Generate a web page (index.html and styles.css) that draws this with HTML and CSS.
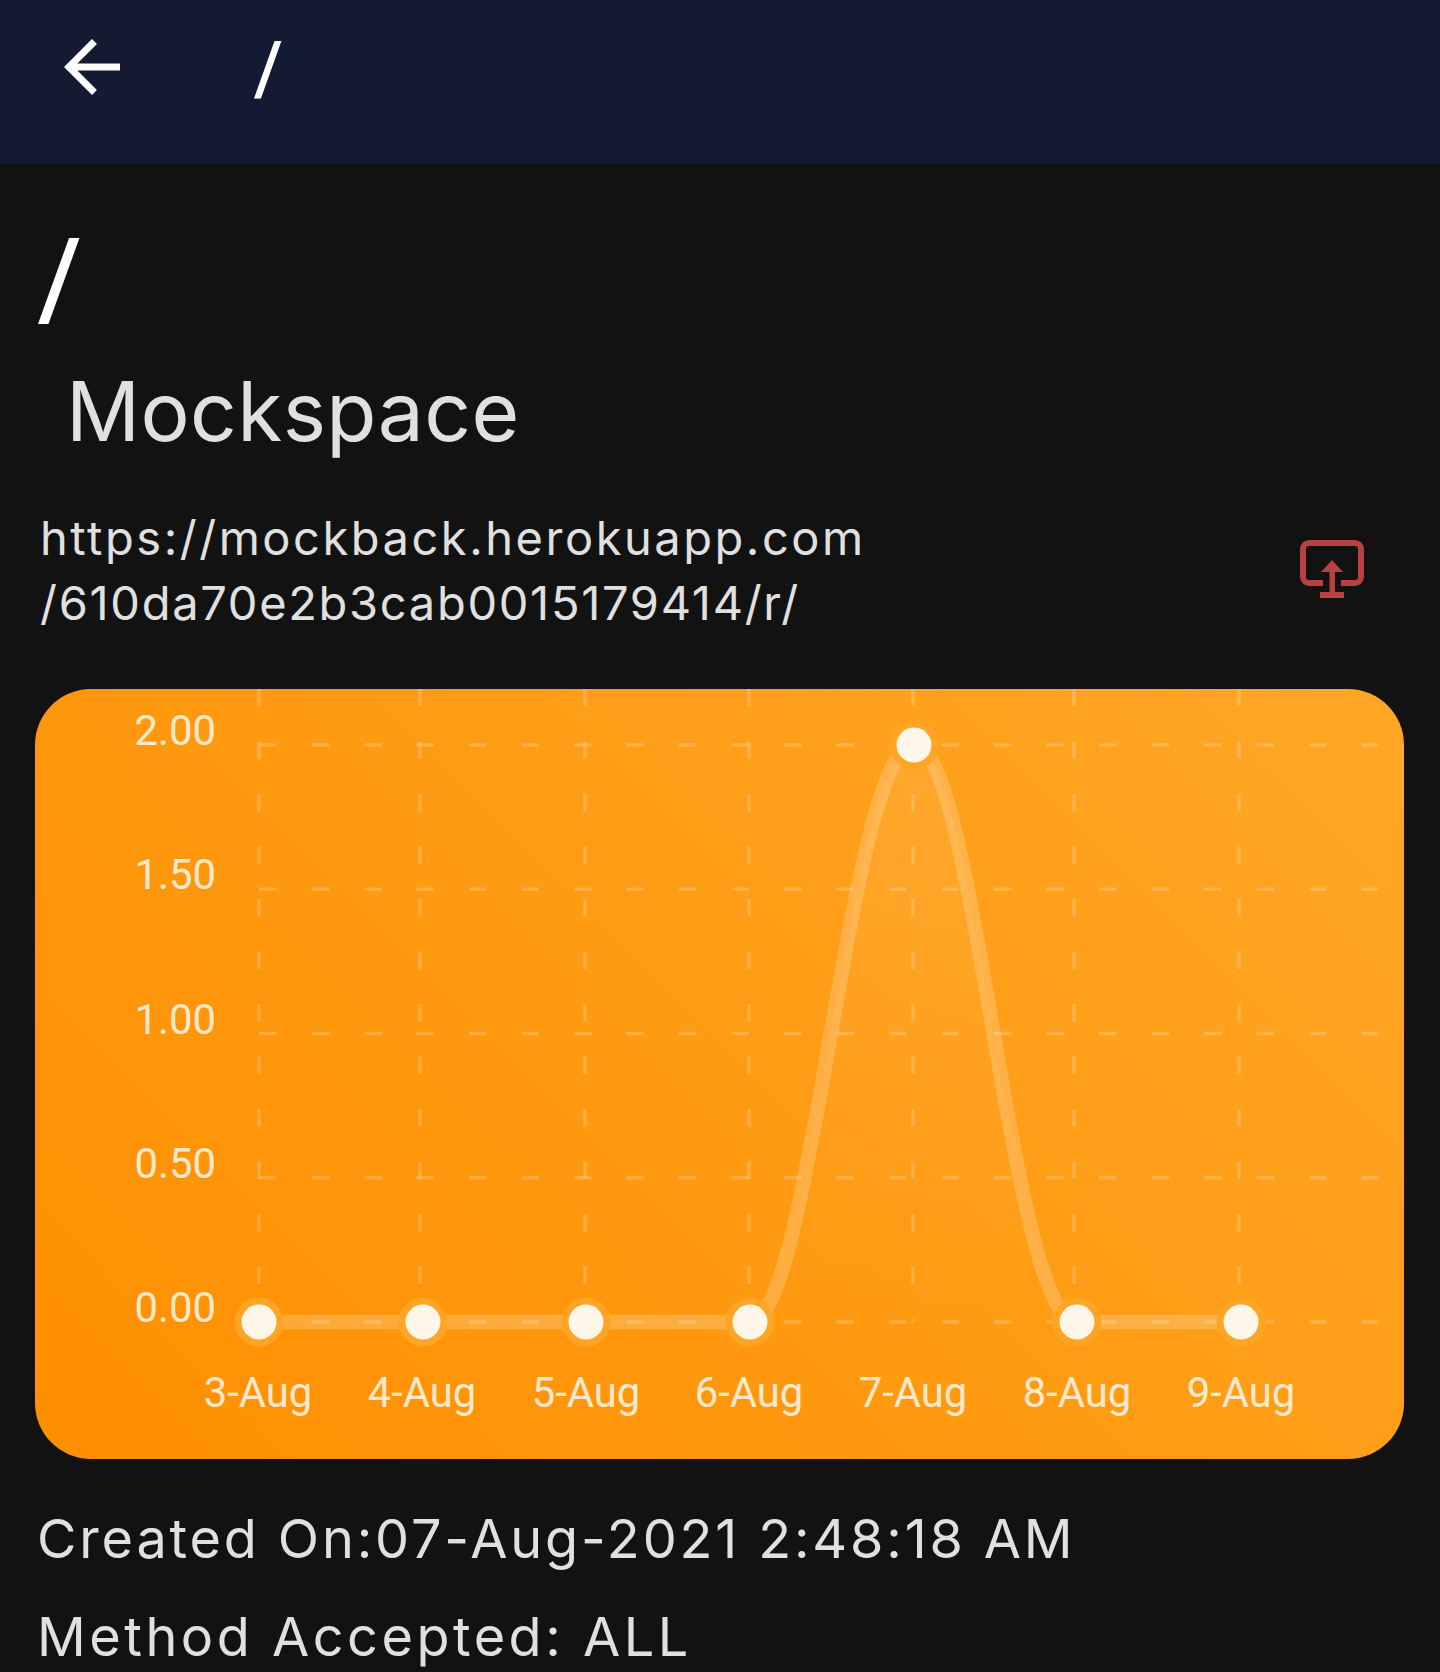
FILE: index.html
```html
<!DOCTYPE html>
<html lang="en">
<head>
<meta charset="utf-8">
<title>Mockspace</title>
<link rel="stylesheet" href="styles.css">
</head>
<body>
<header class="appbar">
  <svg class="back" viewBox="0 0 24 24"><path d="M20 11H7.83l5.59-5.59L12 4l-8 8 8 8 1.41-1.41L7.83 13H20v-2z"/></svg>
  <span class="appbar-title">/</span>
</header>
<main class="content">
  <div class="route">/</div>
  <h1 class="name">Mockspace</h1>
  <div class="url-row">
    <p class="url"><span class="url-host">https://mockback.herokuapp.com</span><span class="url-path">/610da70e2b3cab0015179414/r/</span></p>
    <svg class="open" viewBox="0 0 64 58">
      <path class="open-frame" d="M23 43H9a6 6 0 0 1-6-6V9a6 6 0 0 1 6-6h46a6 6 0 0 1 6 6v28a6 6 0 0 1-6 6H41"/>
      <path class="open-arrow" d="M32 20 43 32H35V52H44V58H20V52H29.5V32H21Z"/>
    </svg>
  </div>
  <section class="card">
    <svg class="chart" viewBox="35 689 1369 770">
      <defs>
        <linearGradient id="areaFade" x1="0" y1="0" x2="0" y2="1">
          <stop offset="0" stop-color="#fff" stop-opacity="0.07"/>
          <stop offset="1" stop-color="#fff" stop-opacity="0"/>
        </linearGradient>
      </defs>
      <g class="grid">
        <path d="M259 745H1382M259 889.25H1382M259 1033.5H1382M259 1177.75H1382M259 1322H1382"/>
        <path d="M259 689V1322M420 689V1322M585 689V1322M749 689V1322M913 689V1322M1074 689V1322M1239 689V1322"/>
      </g>
      <path class="area" d="M750 1322C812 1322 849 745 914 745C976 745 1010 1322 1077 1322Z"/>
      <path class="line" d="M259 1322H750C812 1322 849 745 914 745C976 745 1010 1322 1077 1322H1241"/>
      <g class="halos">
        <circle cx="259" cy="1322" r="24.5"/><circle cx="423" cy="1322" r="24.5"/><circle cx="586" cy="1322" r="24.5"/><circle cx="750" cy="1322" r="24.5"/><circle cx="914" cy="745" r="24.5"/><circle cx="1077" cy="1322" r="24.5"/><circle cx="1241" cy="1322" r="24.5"/>
      </g>
      <g class="dots">
        <circle cx="259" cy="1322" r="17.5"/><circle cx="423" cy="1322" r="17.5"/><circle cx="586" cy="1322" r="17.5"/><circle cx="750" cy="1322" r="17.5"/><circle cx="914" cy="745" r="17.5"/><circle cx="1077" cy="1322" r="17.5"/><circle cx="1241" cy="1322" r="17.5"/>
      </g>
      <g class="labels y-labels">
        <text x="216" y="745">2.00</text>
        <text x="216" y="889">1.50</text>
        <text x="216" y="1034">1.00</text>
        <text x="216" y="1178">0.50</text>
        <text x="216" y="1322">0.00</text>
      </g>
      <g class="labels x-labels">
        <text x="258" y="1407">3-Aug</text>
        <text x="422" y="1407">4-Aug</text>
        <text x="586" y="1407">5-Aug</text>
        <text x="749" y="1407">6-Aug</text>
        <text x="913" y="1407">7-Aug</text>
        <text x="1077" y="1407">8-Aug</text>
        <text x="1241" y="1407">9-Aug</text>
      </g>
    </svg>
  </section>
  <p class="meta meta-created">Created On:07-Aug-2021 2:48:18 AM</p>
  <p class="meta meta-method">Method Accepted: ALL</p>
</main>
</body>
</html>
```

FILE: styles.css
```css
* { box-sizing: border-box; }
html, body { margin: 0; padding: 0; }
body {
  width: 1440px;
  height: 1672px;
  overflow: hidden;
  background: #121212;
  color: #e0e0e0;
  font-family: "Inter", "Liberation Sans", sans-serif;
}
.appbar {
  height: 164px;
  background: #141a31;
  display: flex;
  align-items: flex-start;
  padding: 25px 0 0 50px;
}
.back { width: 84px; height: 84px; fill: #fff; flex: none; }
.appbar-title {
  margin: 2px 0 0 120px;
  font: 500 74px/84px "Roboto", sans-serif;
  color: #fff;
}
.content { padding: 0 36px 0 0; }
.route {
  margin: 52px 0 0 38px;
  font: 500 112px/126px "Roboto", sans-serif;
  color: #fff;
}
.name {
  margin: 22px 0 0 66px;
  font-weight: 400;
  font-size: 82px;
  line-height: 96px;
  letter-spacing: 0.4px;
  color: #e0e0e0;
}
.url-row {
  display: flex;
  align-items: center;
  justify-content: space-between;
  margin: 45px 40px 0 40px;
}
.url {
  margin: 0;
  font-weight: 400;
  font-size: 47px;
  line-height: 65px;
}
.url-host { display: block; letter-spacing: 2.53px; }
.url-path { display: block; letter-spacing: 1.7px; }
.open { width: 64px; height: 58px; flex: none; margin-bottom: 2px; }
.open-frame { fill: none; stroke: #b84141; stroke-width: 6; }
.open-arrow { fill: #b84141; }
.card {
  margin: 54px 0 0 35px;
  height: 770px;
  border-radius: 56px;
  overflow: hidden;
  background: linear-gradient(45deg, #ff8f00, #ffa726);
}
.chart { display: block; width: 1369px; height: 770px; }
.grid path {
  fill: none;
  stroke: rgba(255, 255, 255, 0.2);
  stroke-width: 3.5;
  stroke-dasharray: 17.5 35;
}
.area { fill: url(#areaFade); }
.line { fill: none; stroke: rgba(255, 255, 255, 0.2); stroke-width: 14.5; }
.halos circle { fill: #ffa526; }
.dots circle { fill: #fff6ea; }
.labels text { font-family: "Roboto", sans-serif; font-size: 41.8px; fill: #ffe9cc; }
.y-labels text { text-anchor: end; }
.x-labels text { text-anchor: middle; }
.meta {
  margin: 0 0 0 37px;
  font-weight: 400;
  font-size: 54px;
  line-height: 64px;
  white-space: nowrap;
}
.meta-created { margin-top: 48px; letter-spacing: 2.84px; }
.meta-method { margin-top: 34px; letter-spacing: 3.5px; }
```
